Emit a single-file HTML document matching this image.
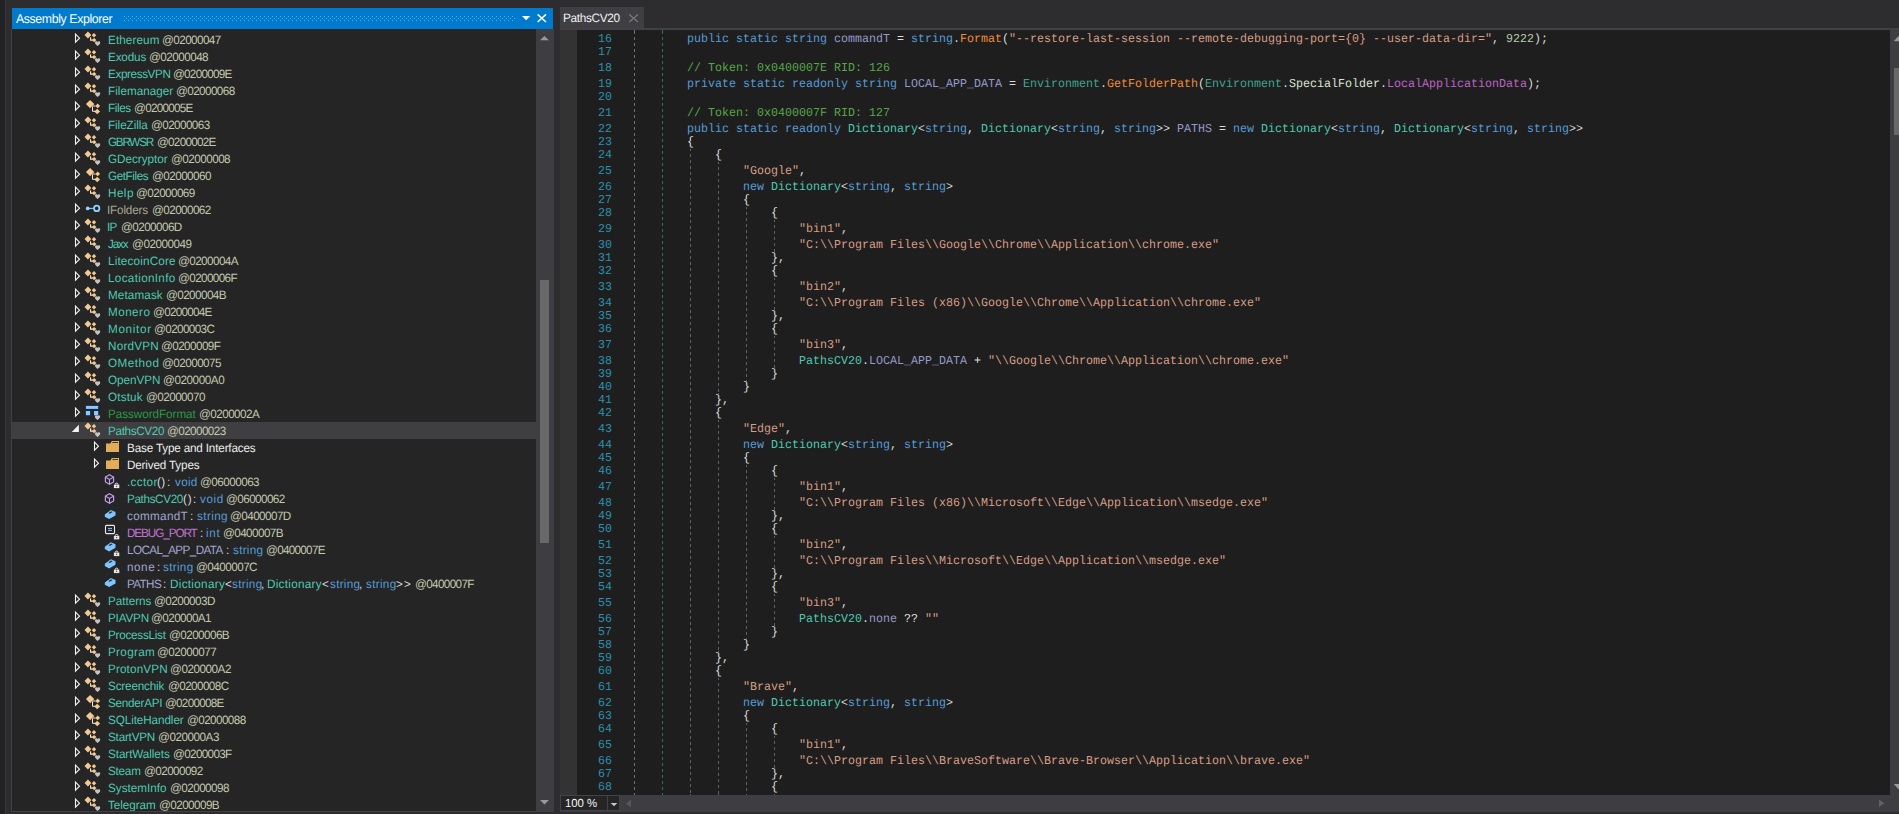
<!DOCTYPE html>
<html><head><meta charset="utf-8"><title>dnSpy</title>
<style>
html,body{margin:0;padding:0}
body{width:1899px;height:814px;overflow:hidden;background:#2d2d30;position:relative;font-family:"Liberation Sans",sans-serif;color:#dcdcdc}
div,span,svg{position:absolute}
.t{white-space:pre;font-size:11.7px;line-height:17px;height:17px;top:0;transform:matrix(1,0,0.001,1.03,0,-0.4);transform-origin:0 13px}
.row{left:12px;width:524px;height:17px}
.cl{white-space:pre;letter-spacing:0.005px;font-variant-ligatures:none;font-family:"Liberation Mono",monospace;font-size:11.6667px;line-height:16px;height:16px;left:631px;transform:matrix(1,0,0.001,1.04,0,0.2);transform-origin:0 11px}
.cl span{position:static}
.ln{white-space:pre;font-family:"Liberation Mono",monospace;font-size:11.6667px;line-height:16px;height:16px;left:577px;width:35px;text-align:right;color:#2b91af;transform:matrix(1,0,0.001,1.04,0,0.2);transform-origin:0 11px}
.g{width:1px}
.k-k{color:#569cd6}.k-t{color:#4ec9b0}.k-st{color:#3fa58f}.k-s{color:#d69d85}.k-n{color:#b5cea8}.k-c{color:#57a64a}.k-p{color:#dcdcdc}.k-sf{color:#9499ca}.k-sm{color:#f08a3c}.k-en{color:#dde4d3}.k-ef{color:#bd63c5}
</style></head><body>
<div style="left:0;top:0;width:5px;height:814px;background:#222224"></div><div style="left:5px;top:0;width:1px;height:814px;background:#3a3a3d"></div><div style="left:12px;top:8px;width:541px;height:21px;background:#007acc"></div><svg style="left:124px;top:15px" width="392" height="7" viewBox="0 0 392 7"><defs><pattern id="gp" width="4" height="4" patternUnits="userSpaceOnUse"><rect x="0" y="1" width="1" height="1" fill="#55aee8"/><rect x="2" y="3" width="1" height="1" fill="#55aee8"/></pattern></defs><rect x="0" y="0" width="392" height="6" fill="url(#gp)"/></svg><svg style="left:520px;top:12px" width="30" height="13" viewBox="0 0 30 13"><path d="M2 4h8.2l-4.1 4.2z" fill="#fff"/><path d="M17.6 2.4l8.4 7.6M26 2.4l-8.4 7.6" stroke="#fff" stroke-width="1.5" fill="none"/></svg><div id="ttl" class="t" style="left:15.6px;top:9px;font-size:12.3px;line-height:21px;height:21px;color:#fff;letter-spacing:-0.375px;left:16.38px">Assembly Explorer</div><div style="left:12px;top:29px;width:524px;height:782px;background:#252526"></div><div style="left:12px;top:811px;width:542px;height:1px;background:#3a3a3d"></div><div style="left:536px;top:29px;width:18px;height:782px;background:#3e3e42"></div><div style="left:540px;top:280px;width:9px;height:263px;background:#686868"></div><svg style="left:536px;top:29px" width="18" height="782" viewBox="0 0 18 782"><path d="M4 11.200h8.900l-4.450 -4.300z" fill="#999"/><path d="M4 771h8.900l-4.450 4.400z" fill="#999"/></svg><div class="row" style="top:31px;"><svg style="left:61px;top:0" width="9" height="17" viewBox="0 0 9 17"><path d="M2.500 3.200v8l4-4z" fill="none" stroke="#f2f2f2" stroke-width="1.100"/></svg><svg style="left:72px;top:0" width="18" height="17" viewBox="0 0 18 17"><path d="M3.950 0.600l3.450 3.400-3.450 3.400-3.450-3.400z" fill="#f3c98f"/><path d="M10 2.100l2.200 2.150-2.200 2.150-2.200-2.150z" fill="#f3c98f"/><path d="M10.100 6.900l2.250 2.200-2.250 2.200-2.250-2.200z" fill="#f3c98f"/><path d="M6.600 6.200v2.900h2" stroke="#fbe9cf" stroke-width="1.100" fill="none"/><path d="M13.6 10.8c-.7-.9-2.6-.7-2.6.9 0 1.300 1.500 2.300 2.600 3.300 1.100-1 2.600-2 2.600-3.300 0-1.600-1.900-1.800-2.600-.9z" fill="#c4c4c4"/></svg><span class="t" style="left:95.90px;color:#4ec9b0;letter-spacing:0.107px;margin-left:-0.36px">Ethereum</span><span class="t" style="left:150.50px;color:#c3c9ae;letter-spacing:-0.572px;margin-left:-0.32px">@02000047</span></div>
<div class="row" style="top:48px;"><svg style="left:61px;top:0" width="9" height="17" viewBox="0 0 9 17"><path d="M2.500 3.200v8l4-4z" fill="none" stroke="#f2f2f2" stroke-width="1.100"/></svg><svg style="left:72px;top:0" width="18" height="17" viewBox="0 0 18 17"><path d="M3.950 0.600l3.450 3.400-3.450 3.400-3.450-3.400z" fill="#f3c98f"/><path d="M10 2.100l2.200 2.150-2.200 2.150-2.200-2.150z" fill="#f3c98f"/><path d="M10.100 6.900l2.250 2.200-2.250 2.200-2.250-2.200z" fill="#f3c98f"/><path d="M6.600 6.200v2.900h2" stroke="#fbe9cf" stroke-width="1.100" fill="none"/><path d="M13.6 10.8c-.7-.9-2.6-.7-2.6.9 0 1.300 1.500 2.300 2.600 3.300 1.100-1 2.600-2 2.600-3.300 0-1.600-1.900-1.800-2.600-.9z" fill="#c4c4c4"/></svg><span class="t" style="left:95.90px;color:#4ec9b0;letter-spacing:-0.143px;margin-left:-0.36px">Exodus</span><span class="t" style="left:137.20px;color:#c3c9ae;letter-spacing:-0.532px;margin-left:-0.32px">@02000048</span></div>
<div class="row" style="top:65px;"><svg style="left:61px;top:0" width="9" height="17" viewBox="0 0 9 17"><path d="M2.500 3.200v8l4-4z" fill="none" stroke="#f2f2f2" stroke-width="1.100"/></svg><svg style="left:72px;top:0" width="18" height="17" viewBox="0 0 18 17"><path d="M3.950 0.600l3.450 3.400-3.450 3.400-3.450-3.400z" fill="#f3c98f"/><path d="M10 2.100l2.200 2.150-2.200 2.150-2.200-2.150z" fill="#f3c98f"/><path d="M10.100 6.900l2.250 2.200-2.250 2.200-2.250-2.200z" fill="#f3c98f"/><path d="M6.600 6.200v2.900h2" stroke="#fbe9cf" stroke-width="1.100" fill="none"/><path d="M13.6 10.8c-.7-.9-2.6-.7-2.6.9 0 1.300 1.500 2.300 2.600 3.300 1.100-1 2.600-2 2.600-3.300 0-1.600-1.900-1.800-2.600-.9z" fill="#c4c4c4"/></svg><span class="t" style="left:95.90px;color:#4ec9b0;letter-spacing:-0.374px;margin-left:-0.36px">ExpressVPN</span><span class="t" style="left:161.50px;color:#c3c9ae;letter-spacing:-0.745px;margin-left:-0.32px">@0200009E</span></div>
<div class="row" style="top:82px;"><svg style="left:61px;top:0" width="9" height="17" viewBox="0 0 9 17"><path d="M2.500 3.200v8l4-4z" fill="none" stroke="#f2f2f2" stroke-width="1.100"/></svg><svg style="left:72px;top:0" width="18" height="17" viewBox="0 0 18 17"><path d="M3.950 0.600l3.450 3.400-3.450 3.400-3.450-3.400z" fill="#f3c98f"/><path d="M10 2.100l2.200 2.150-2.200 2.150-2.200-2.150z" fill="#f3c98f"/><path d="M10.100 6.900l2.250 2.200-2.250 2.200-2.250-2.200z" fill="#f3c98f"/><path d="M6.600 6.200v2.900h2" stroke="#fbe9cf" stroke-width="1.100" fill="none"/><path d="M13.6 10.8c-.7-.9-2.6-.7-2.6.9 0 1.300 1.500 2.300 2.600 3.300 1.100-1 2.600-2 2.600-3.300 0-1.600-1.900-1.800-2.600-.9z" fill="#c4c4c4"/></svg><span class="t" style="left:95.90px;color:#4ec9b0;letter-spacing:0.027px;margin-left:-0.36px">Filemanager</span><span class="t" style="left:164.50px;color:#c3c9ae;letter-spacing:-0.582px;margin-left:-0.32px">@02000068</span></div>
<div class="row" style="top:99px;"><svg style="left:61px;top:0" width="9" height="17" viewBox="0 0 9 17"><path d="M2.500 3.200v8l4-4z" fill="none" stroke="#f2f2f2" stroke-width="1.100"/></svg><svg style="left:72px;top:0" width="18" height="17" viewBox="0 0 18 17"><path d="M6.100 0.900l4.200 4.150-4.200 4.150-4.150-4.150z" fill="#f3c98f"/><path d="M13.700 4.500l2.400 2.400-2.400 2.400-2.400-2.400z" fill="#f3c98f"/><path d="M13.200 9.700l2.900 2.800-2.900 2.800-2.900-2.800z" fill="#f3c98f"/><path d="M8.500 7.500v4.800h2.500M8.500 7h3" stroke="#f7ead6" stroke-width="1" fill="none"/></svg><span class="t" style="left:95.90px;color:#4ec9b0;letter-spacing:-0.379px;margin-left:-0.36px">Files</span><span class="t" style="left:122.10px;color:#c3c9ae;letter-spacing:-0.733px;margin-left:-0.32px">@0200005E</span></div>
<div class="row" style="top:116px;"><svg style="left:61px;top:0" width="9" height="17" viewBox="0 0 9 17"><path d="M2.500 3.200v8l4-4z" fill="none" stroke="#f2f2f2" stroke-width="1.100"/></svg><svg style="left:72px;top:0" width="18" height="17" viewBox="0 0 18 17"><path d="M3.950 0.600l3.450 3.400-3.450 3.400-3.450-3.400z" fill="#f3c98f"/><path d="M10 2.100l2.200 2.150-2.200 2.150-2.200-2.150z" fill="#f3c98f"/><path d="M10.100 6.900l2.250 2.200-2.250 2.200-2.250-2.200z" fill="#f3c98f"/><path d="M6.600 6.200v2.900h2" stroke="#fbe9cf" stroke-width="1.100" fill="none"/><path d="M13.6 10.8c-.7-.9-2.6-.7-2.6.9 0 1.300 1.500 2.300 2.600 3.300 1.100-1 2.600-2 2.600-3.300 0-1.600-1.900-1.800-2.600-.9z" fill="#c4c4c4"/></svg><span class="t" style="left:95.90px;color:#4ec9b0;letter-spacing:-0.065px;margin-left:-0.36px">FileZilla</span><span class="t" style="left:139.20px;color:#c3c9ae;letter-spacing:-0.582px;margin-left:-0.32px">@02000063</span></div>
<div class="row" style="top:133px;"><svg style="left:61px;top:0" width="9" height="17" viewBox="0 0 9 17"><path d="M2.500 3.200v8l4-4z" fill="none" stroke="#f2f2f2" stroke-width="1.100"/></svg><svg style="left:72px;top:0" width="18" height="17" viewBox="0 0 18 17"><path d="M3.950 0.600l3.450 3.400-3.450 3.400-3.450-3.400z" fill="#f3c98f"/><path d="M10 2.100l2.200 2.150-2.200 2.150-2.200-2.150z" fill="#f3c98f"/><path d="M10.100 6.900l2.250 2.200-2.250 2.200-2.250-2.200z" fill="#f3c98f"/><path d="M6.600 6.200v2.900h2" stroke="#fbe9cf" stroke-width="1.100" fill="none"/><path d="M13.6 10.8c-.7-.9-2.6-.7-2.6.9 0 1.300 1.500 2.300 2.600 3.300 1.100-1 2.600-2 2.600-3.300 0-1.600-1.900-1.800-2.600-.9z" fill="#c4c4c4"/></svg><span class="t" style="left:95.90px;color:#4ec9b0;letter-spacing:-1.254px;margin-left:0.01px">GBRWSR</span><span class="t" style="left:145.50px;color:#c3c9ae;letter-spacing:-0.745px;margin-left:-0.32px">@0200002E</span></div>
<div class="row" style="top:150px;"><svg style="left:61px;top:0" width="9" height="17" viewBox="0 0 9 17"><path d="M2.500 3.200v8l4-4z" fill="none" stroke="#f2f2f2" stroke-width="1.100"/></svg><svg style="left:72px;top:0" width="18" height="17" viewBox="0 0 18 17"><path d="M3.950 0.600l3.450 3.400-3.450 3.400-3.450-3.400z" fill="#f3c98f"/><path d="M10 2.100l2.200 2.150-2.200 2.150-2.200-2.150z" fill="#f3c98f"/><path d="M10.100 6.900l2.250 2.200-2.250 2.200-2.250-2.200z" fill="#f3c98f"/><path d="M6.600 6.200v2.900h2" stroke="#fbe9cf" stroke-width="1.100" fill="none"/><path d="M13.6 10.8c-.7-.9-2.6-.7-2.6.9 0 1.300 1.500 2.300 2.600 3.300 1.100-1 2.600-2 2.600-3.300 0-1.600-1.900-1.800-2.600-.9z" fill="#c4c4c4"/></svg><span class="t" style="left:95.90px;color:#4ec9b0;letter-spacing:-0.022px;margin-left:0.01px">GDecryptor</span><span class="t" style="left:159.10px;color:#c3c9ae;letter-spacing:-0.532px;margin-left:-0.32px">@02000008</span></div>
<div class="row" style="top:167px;"><svg style="left:61px;top:0" width="9" height="17" viewBox="0 0 9 17"><path d="M2.500 3.200v8l4-4z" fill="none" stroke="#f2f2f2" stroke-width="1.100"/></svg><svg style="left:72px;top:0" width="18" height="17" viewBox="0 0 18 17"><path d="M6.100 0.900l4.200 4.150-4.200 4.150-4.150-4.150z" fill="#f3c98f"/><path d="M13.700 4.500l2.400 2.400-2.400 2.400-2.400-2.400z" fill="#f3c98f"/><path d="M13.200 9.700l2.900 2.800-2.900 2.800-2.900-2.800z" fill="#f3c98f"/><path d="M8.500 7.500v4.800h2.500M8.500 7h3" stroke="#f7ead6" stroke-width="1" fill="none"/></svg><span class="t" style="left:95.90px;color:#4ec9b0;letter-spacing:-0.417px;margin-left:0.01px">GetFiles</span><span class="t" style="left:140.10px;color:#c3c9ae;letter-spacing:-0.551px;margin-left:-0.32px">@02000060</span></div>
<div class="row" style="top:184px;"><svg style="left:61px;top:0" width="9" height="17" viewBox="0 0 9 17"><path d="M2.500 3.200v8l4-4z" fill="none" stroke="#f2f2f2" stroke-width="1.100"/></svg><svg style="left:72px;top:0" width="18" height="17" viewBox="0 0 18 17"><path d="M3.950 0.600l3.450 3.400-3.450 3.400-3.450-3.400z" fill="#f3c98f"/><path d="M10 2.100l2.200 2.150-2.200 2.150-2.200-2.150z" fill="#f3c98f"/><path d="M10.100 6.900l2.250 2.200-2.250 2.200-2.250-2.200z" fill="#f3c98f"/><path d="M6.600 6.200v2.900h2" stroke="#fbe9cf" stroke-width="1.100" fill="none"/><path d="M13.6 10.8c-.7-.9-2.6-.7-2.6.9 0 1.300 1.500 2.300 2.600 3.300 1.100-1 2.600-2 2.600-3.300 0-1.600-1.900-1.800-2.600-.9z" fill="#c4c4c4"/></svg><span class="t" style="left:95.90px;color:#4ec9b0;letter-spacing:0.464px;margin-left:-0.36px">Help</span><span class="t" style="left:124.40px;color:#c3c9ae;letter-spacing:-0.577px;margin-left:-0.32px">@02000069</span></div>
<div class="row" style="top:201px;"><svg style="left:61px;top:0" width="9" height="17" viewBox="0 0 9 17"><path d="M2.500 3.200v8l4-4z" fill="none" stroke="#f2f2f2" stroke-width="1.100"/></svg><svg style="left:72px;top:0" width="18" height="17" viewBox="0 0 18 17"><circle cx="3.700" cy="7.400" r="1.900" fill="#8dd0ff"/><path d="M5 7.400h4" stroke="#8dd0ff" stroke-width="1.100"/><circle cx="12.700" cy="7.400" r="2.700" fill="none" stroke="#8dd0ff" stroke-width="1.800"/></svg><span class="t" style="left:95.90px;color:#a5a592;letter-spacing:-0.164px;margin-left:-0.48px">IFolders</span><span class="t" style="left:140.10px;color:#c3c9ae;letter-spacing:-0.572px;margin-left:-0.32px">@02000062</span></div>
<div class="row" style="top:218px;"><svg style="left:61px;top:0" width="9" height="17" viewBox="0 0 9 17"><path d="M2.500 3.200v8l4-4z" fill="none" stroke="#f2f2f2" stroke-width="1.100"/></svg><svg style="left:72px;top:0" width="18" height="17" viewBox="0 0 18 17"><path d="M3.950 0.600l3.450 3.400-3.450 3.400-3.450-3.400z" fill="#f3c98f"/><path d="M10 2.100l2.200 2.150-2.200 2.150-2.200-2.150z" fill="#f3c98f"/><path d="M10.100 6.900l2.250 2.200-2.250 2.200-2.250-2.200z" fill="#f3c98f"/><path d="M6.600 6.200v2.900h2" stroke="#fbe9cf" stroke-width="1.100" fill="none"/><path d="M13.6 10.8c-.7-.9-2.6-.7-2.6.9 0 1.300 1.500 2.300 2.600 3.300 1.100-1 2.600-2 2.600-3.300 0-1.600-1.900-1.800-2.600-.9z" fill="#c4c4c4"/></svg><span class="t" style="left:95.90px;color:#4ec9b0;letter-spacing:-0.863px;margin-left:-0.48px">IP</span><span class="t" style="left:108.90px;color:#c3c9ae;letter-spacing:-0.568px;margin-left:-0.32px">@0200006D</span></div>
<div class="row" style="top:235px;"><svg style="left:61px;top:0" width="9" height="17" viewBox="0 0 9 17"><path d="M2.500 3.200v8l4-4z" fill="none" stroke="#f2f2f2" stroke-width="1.100"/></svg><svg style="left:72px;top:0" width="18" height="17" viewBox="0 0 18 17"><path d="M3.950 0.600l3.450 3.400-3.450 3.400-3.450-3.400z" fill="#f3c98f"/><path d="M10 2.100l2.200 2.150-2.200 2.150-2.200-2.150z" fill="#f3c98f"/><path d="M10.100 6.900l2.250 2.200-2.250 2.200-2.250-2.200z" fill="#f3c98f"/><path d="M6.600 6.200v2.900h2" stroke="#fbe9cf" stroke-width="1.100" fill="none"/><path d="M13.6 10.8c-.7-.9-2.6-.7-2.6.9 0 1.300 1.500 2.300 2.600 3.300 1.100-1 2.600-2 2.600-3.300 0-1.600-1.900-1.800-2.600-.9z" fill="#c4c4c4"/></svg><span class="t" style="left:95.90px;color:#4ec9b0;letter-spacing:-1.150px;margin-left:0.42px">Jaxx</span><span class="t" style="left:120.70px;color:#c3c9ae;letter-spacing:-0.489px;margin-left:-0.32px">@02000049</span></div>
<div class="row" style="top:252px;"><svg style="left:61px;top:0" width="9" height="17" viewBox="0 0 9 17"><path d="M2.500 3.200v8l4-4z" fill="none" stroke="#f2f2f2" stroke-width="1.100"/></svg><svg style="left:72px;top:0" width="18" height="17" viewBox="0 0 18 17"><path d="M3.950 0.600l3.450 3.400-3.450 3.400-3.450-3.400z" fill="#f3c98f"/><path d="M10 2.100l2.200 2.150-2.200 2.150-2.200-2.150z" fill="#f3c98f"/><path d="M10.100 6.900l2.250 2.200-2.250 2.200-2.250-2.200z" fill="#f3c98f"/><path d="M6.600 6.200v2.900h2" stroke="#fbe9cf" stroke-width="1.100" fill="none"/><path d="M13.6 10.8c-.7-.9-2.6-.7-2.6.9 0 1.300 1.500 2.300 2.600 3.300 1.100-1 2.600-2 2.600-3.300 0-1.600-1.900-1.800-2.600-.9z" fill="#c4c4c4"/></svg><span class="t" style="left:95.90px;color:#4ec9b0;letter-spacing:0.177px;margin-left:-0.36px">LitecoinCore</span><span class="t" style="left:166.40px;color:#c3c9ae;letter-spacing:-0.580px;margin-left:-0.32px">@0200004A</span></div>
<div class="row" style="top:269px;"><svg style="left:61px;top:0" width="9" height="17" viewBox="0 0 9 17"><path d="M2.500 3.200v8l4-4z" fill="none" stroke="#f2f2f2" stroke-width="1.100"/></svg><svg style="left:72px;top:0" width="18" height="17" viewBox="0 0 18 17"><path d="M3.950 0.600l3.450 3.400-3.450 3.400-3.450-3.400z" fill="#f3c98f"/><path d="M10 2.100l2.200 2.150-2.200 2.150-2.200-2.150z" fill="#f3c98f"/><path d="M10.100 6.900l2.250 2.200-2.250 2.200-2.250-2.200z" fill="#f3c98f"/><path d="M6.600 6.200v2.900h2" stroke="#fbe9cf" stroke-width="1.100" fill="none"/><path d="M13.6 10.8c-.7-.9-2.6-.7-2.6.9 0 1.300 1.500 2.300 2.600 3.300 1.100-1 2.600-2 2.600-3.300 0-1.600-1.900-1.800-2.600-.9z" fill="#c4c4c4"/></svg><span class="t" style="left:95.90px;color:#4ec9b0;letter-spacing:0.323px;margin-left:-0.36px">LocationInfo</span><span class="t" style="left:166.20px;color:#c3c9ae;letter-spacing:-0.618px;margin-left:-0.32px">@0200006F</span></div>
<div class="row" style="top:286px;"><svg style="left:61px;top:0" width="9" height="17" viewBox="0 0 9 17"><path d="M2.500 3.200v8l4-4z" fill="none" stroke="#f2f2f2" stroke-width="1.100"/></svg><svg style="left:72px;top:0" width="18" height="17" viewBox="0 0 18 17"><path d="M3.950 0.600l3.450 3.400-3.450 3.400-3.450-3.400z" fill="#f3c98f"/><path d="M10 2.100l2.200 2.150-2.200 2.150-2.200-2.150z" fill="#f3c98f"/><path d="M10.100 6.900l2.250 2.200-2.250 2.200-2.250-2.200z" fill="#f3c98f"/><path d="M6.600 6.200v2.900h2" stroke="#fbe9cf" stroke-width="1.100" fill="none"/><path d="M13.6 10.8c-.7-.9-2.6-.7-2.6.9 0 1.300 1.500 2.300 2.600 3.300 1.100-1 2.600-2 2.600-3.300 0-1.600-1.900-1.800-2.600-.9z" fill="#c4c4c4"/></svg><span class="t" style="left:95.90px;color:#4ec9b0;letter-spacing:0.115px;margin-left:-0.36px">Metamask</span><span class="t" style="left:154.10px;color:#c3c9ae;letter-spacing:-0.581px;margin-left:-0.32px">@0200004B</span></div>
<div class="row" style="top:303px;"><svg style="left:61px;top:0" width="9" height="17" viewBox="0 0 9 17"><path d="M2.500 3.200v8l4-4z" fill="none" stroke="#f2f2f2" stroke-width="1.100"/></svg><svg style="left:72px;top:0" width="18" height="17" viewBox="0 0 18 17"><path d="M3.950 0.600l3.450 3.400-3.450 3.400-3.450-3.400z" fill="#f3c98f"/><path d="M10 2.100l2.200 2.150-2.200 2.150-2.200-2.150z" fill="#f3c98f"/><path d="M10.100 6.900l2.250 2.200-2.250 2.200-2.250-2.200z" fill="#f3c98f"/><path d="M6.600 6.200v2.900h2" stroke="#fbe9cf" stroke-width="1.100" fill="none"/><path d="M13.6 10.8c-.7-.9-2.6-.7-2.6.9 0 1.300 1.500 2.300 2.600 3.300 1.100-1 2.600-2 2.600-3.300 0-1.600-1.900-1.800-2.600-.9z" fill="#c4c4c4"/></svg><span class="t" style="left:95.90px;color:#4ec9b0;letter-spacing:0.459px;margin-left:-0.36px">Monero</span><span class="t" style="left:141.10px;color:#c3c9ae;letter-spacing:-0.720px;margin-left:-0.32px">@0200004E</span></div>
<div class="row" style="top:320px;"><svg style="left:61px;top:0" width="9" height="17" viewBox="0 0 9 17"><path d="M2.500 3.200v8l4-4z" fill="none" stroke="#f2f2f2" stroke-width="1.100"/></svg><svg style="left:72px;top:0" width="18" height="17" viewBox="0 0 18 17"><path d="M3.950 0.600l3.450 3.400-3.450 3.400-3.450-3.400z" fill="#f3c98f"/><path d="M10 2.100l2.200 2.150-2.200 2.150-2.200-2.150z" fill="#f3c98f"/><path d="M10.100 6.900l2.250 2.200-2.250 2.200-2.250-2.200z" fill="#f3c98f"/><path d="M6.600 6.200v2.900h2" stroke="#fbe9cf" stroke-width="1.100" fill="none"/><path d="M13.6 10.8c-.7-.9-2.6-.7-2.6.9 0 1.300 1.500 2.300 2.600 3.300 1.100-1 2.600-2 2.600-3.300 0-1.600-1.900-1.800-2.600-.9z" fill="#c4c4c4"/></svg><span class="t" style="left:95.90px;color:#4ec9b0;letter-spacing:0.693px;margin-left:-0.36px">Monitor</span><span class="t" style="left:142.30px;color:#c3c9ae;letter-spacing:-0.608px;margin-left:-0.32px">@0200003C</span></div>
<div class="row" style="top:337px;"><svg style="left:61px;top:0" width="9" height="17" viewBox="0 0 9 17"><path d="M2.500 3.200v8l4-4z" fill="none" stroke="#f2f2f2" stroke-width="1.100"/></svg><svg style="left:72px;top:0" width="18" height="17" viewBox="0 0 18 17"><path d="M3.950 0.600l3.450 3.400-3.450 3.400-3.450-3.400z" fill="#f3c98f"/><path d="M10 2.100l2.200 2.150-2.200 2.150-2.200-2.150z" fill="#f3c98f"/><path d="M10.100 6.900l2.250 2.200-2.250 2.200-2.250-2.200z" fill="#f3c98f"/><path d="M6.600 6.200v2.900h2" stroke="#fbe9cf" stroke-width="1.100" fill="none"/><path d="M13.6 10.8c-.7-.9-2.6-.7-2.6.9 0 1.300 1.500 2.300 2.600 3.300 1.100-1 2.600-2 2.600-3.300 0-1.600-1.900-1.800-2.600-.9z" fill="#c4c4c4"/></svg><span class="t" style="left:95.90px;color:#4ec9b0;letter-spacing:0.238px;margin-left:-0.36px">NordVPN</span><span class="t" style="left:149.00px;color:#c3c9ae;letter-spacing:-0.580px;margin-left:-0.32px">@0200009F</span></div>
<div class="row" style="top:354px;"><svg style="left:61px;top:0" width="9" height="17" viewBox="0 0 9 17"><path d="M2.500 3.200v8l4-4z" fill="none" stroke="#f2f2f2" stroke-width="1.100"/></svg><svg style="left:72px;top:0" width="18" height="17" viewBox="0 0 18 17"><path d="M3.950 0.600l3.450 3.400-3.450 3.400-3.450-3.400z" fill="#f3c98f"/><path d="M10 2.100l2.200 2.150-2.200 2.150-2.200-2.150z" fill="#f3c98f"/><path d="M10.100 6.900l2.250 2.200-2.250 2.200-2.250-2.200z" fill="#f3c98f"/><path d="M6.600 6.200v2.900h2" stroke="#fbe9cf" stroke-width="1.100" fill="none"/><path d="M13.6 10.8c-.7-.9-2.6-.7-2.6.9 0 1.300 1.500 2.300 2.600 3.300 1.100-1 2.600-2 2.600-3.300 0-1.600-1.900-1.800-2.600-.9z" fill="#c4c4c4"/></svg><span class="t" style="left:95.90px;color:#4ec9b0;letter-spacing:0.486px;margin-left:0.05px">OMethod</span><span class="t" style="left:150.20px;color:#c3c9ae;letter-spacing:-0.547px;margin-left:-0.32px">@02000075</span></div>
<div class="row" style="top:371px;"><svg style="left:61px;top:0" width="9" height="17" viewBox="0 0 9 17"><path d="M2.500 3.200v8l4-4z" fill="none" stroke="#f2f2f2" stroke-width="1.100"/></svg><svg style="left:72px;top:0" width="18" height="17" viewBox="0 0 18 17"><path d="M3.950 0.600l3.450 3.400-3.450 3.400-3.450-3.400z" fill="#f3c98f"/><path d="M10 2.100l2.200 2.150-2.200 2.150-2.200-2.150z" fill="#f3c98f"/><path d="M10.100 6.900l2.250 2.200-2.250 2.200-2.250-2.200z" fill="#f3c98f"/><path d="M6.600 6.200v2.900h2" stroke="#fbe9cf" stroke-width="1.100" fill="none"/><path d="M13.6 10.8c-.7-.9-2.6-.7-2.6.9 0 1.300 1.500 2.300 2.600 3.300 1.100-1 2.600-2 2.600-3.300 0-1.600-1.900-1.800-2.600-.9z" fill="#c4c4c4"/></svg><span class="t" style="left:95.90px;color:#4ec9b0;letter-spacing:-0.038px;margin-left:0.05px">OpenVPN</span><span class="t" style="left:151.40px;color:#c3c9ae;letter-spacing:-0.439px;margin-left:-0.32px">@020000A0</span></div>
<div class="row" style="top:388px;"><svg style="left:61px;top:0" width="9" height="17" viewBox="0 0 9 17"><path d="M2.500 3.200v8l4-4z" fill="none" stroke="#f2f2f2" stroke-width="1.100"/></svg><svg style="left:72px;top:0" width="18" height="17" viewBox="0 0 18 17"><path d="M3.950 0.600l3.450 3.400-3.450 3.400-3.450-3.400z" fill="#f3c98f"/><path d="M10 2.100l2.200 2.150-2.200 2.150-2.200-2.150z" fill="#f3c98f"/><path d="M10.100 6.900l2.250 2.200-2.250 2.200-2.250-2.200z" fill="#f3c98f"/><path d="M6.600 6.200v2.900h2" stroke="#fbe9cf" stroke-width="1.100" fill="none"/><path d="M13.6 10.8c-.7-.9-2.6-.7-2.6.9 0 1.300 1.500 2.300 2.600 3.300 1.100-1 2.600-2 2.600-3.300 0-1.600-1.900-1.800-2.600-.9z" fill="#c4c4c4"/></svg><span class="t" style="left:95.90px;color:#4ec9b0;letter-spacing:0.169px;margin-left:0.05px">Otstuk</span><span class="t" style="left:134.20px;color:#c3c9ae;letter-spacing:-0.551px;margin-left:-0.32px">@02000070</span></div>
<div class="row" style="top:405px;"><svg style="left:61px;top:0" width="9" height="17" viewBox="0 0 9 17"><path d="M2.500 3.200v8l4-4z" fill="none" stroke="#f2f2f2" stroke-width="1.100"/></svg><svg style="left:72px;top:0" width="18" height="17" viewBox="0 0 18 17"><rect x="1.400" y="0.400" width="13.300" height="4" fill="#0c2d52"/><rect x="1.400" y="5.500" width="5.200" height="5.200" fill="#0c2d52"/><rect x="9.500" y="5.500" width="5.200" height="5.200" fill="#0c2d52"/><rect x="1.900" y="0.900" width="12.300" height="3" fill="#8cc8ff"/><rect x="1.900" y="6" width="4.200" height="4.200" fill="#8cc8ff"/><rect x="10" y="6" width="4.200" height="4.200" fill="#8cc8ff"/><path d="M13.5 10.9c-.7-.9-2.6-.7-2.6.9 0 1.300 1.500 2.300 2.600 3.300 1.100-1 2.600-2 2.600-3.300 0-1.600-1.900-1.800-2.600-.9z" fill="#c4c4c4"/></svg><span class="t" style="left:95.90px;color:#2a9845;letter-spacing:-0.039px;margin-left:-0.36px">PasswordFormat</span><span class="t" style="left:187.30px;color:#c3c9ae;letter-spacing:-0.555px;margin-left:-0.32px">@0200002A</span></div>
<div class="row" style="top:422px;background:#3f3f42;"><svg style="left:59.8px;top:0" width="10" height="17" viewBox="0 0 10 17"><path d="M6.900 2.800v7.300h-7.300z" fill="#f4f4f4"/></svg><svg style="left:72px;top:0" width="18" height="17" viewBox="0 0 18 17"><path d="M3.950 0.600l3.450 3.400-3.450 3.400-3.450-3.400z" fill="#f3c98f"/><path d="M10 2.100l2.200 2.150-2.200 2.150-2.200-2.150z" fill="#f3c98f"/><path d="M10.100 6.900l2.250 2.200-2.250 2.200-2.250-2.200z" fill="#f3c98f"/><path d="M6.600 6.200v2.900h2" stroke="#fbe9cf" stroke-width="1.100" fill="none"/><path d="M13.6 10.8c-.7-.9-2.6-.7-2.6.9 0 1.300 1.500 2.300 2.600 3.300 1.100-1 2.600-2 2.600-3.300 0-1.600-1.900-1.800-2.600-.9z" fill="#c4c4c4"/></svg><span class="t" style="left:95.90px;color:#4ec9b0;letter-spacing:-0.328px;margin-left:-0.36px">PathsCV20</span><span class="t" style="left:155.30px;color:#c3c9ae;letter-spacing:-0.582px;margin-left:-0.32px">@02000023</span></div>
<div class="row" style="top:439px;"><svg style="left:80px;top:0" width="9" height="17" viewBox="0 0 9 17"><path d="M2.500 3.200v8l4-4z" fill="none" stroke="#f2f2f2" stroke-width="1.100"/></svg><svg style="left:92px;top:0" width="18" height="17" viewBox="0 0 18 17"><path d="M2 4.600h4.400l1.400-2.600h7.200v11h-13z" fill="#e2ad5a"/><path d="M8.400 3.500h5.600" stroke="#3a2c10" stroke-width="0.900"/></svg><span class="t" style="left:115.20px;color:#ececec;letter-spacing:-0.159px;margin-left:-0.36px">Base Type and Interfaces</span></div>
<div class="row" style="top:456px;"><svg style="left:80px;top:0" width="9" height="17" viewBox="0 0 9 17"><path d="M2.500 3.200v8l4-4z" fill="none" stroke="#f2f2f2" stroke-width="1.100"/></svg><svg style="left:92px;top:0" width="18" height="17" viewBox="0 0 18 17"><path d="M2 4.600h4.400l1.400-2.600h7.200v11h-13z" fill="#e2ad5a"/><path d="M8.400 3.500h5.600" stroke="#3a2c10" stroke-width="0.900"/></svg><span class="t" style="left:115.20px;color:#ececec;letter-spacing:-0.161px;margin-left:-0.36px">Derived Types</span></div>
<div class="row" style="top:473px;"><svg style="left:92px;top:0" width="18" height="17" viewBox="0 0 18 17"><g transform="translate(0 1)"><path d="M5.500 0.700l4.100 2.350v4.900l-4.100 2.350-4.100-2.350v-4.900z" fill="none" stroke="#c09ce8" stroke-width="1.200"/><path d="M1.600 3.200l3.900 2.200 3.900-2.200M5.500 5.400v4.800" fill="none" stroke="#c09ce8" stroke-width="1.100"/></g><rect x="9.9" y="11.6" width="5.4" height="3.5" fill="#e6e6e6"/><path d="M11.3 11.6v-.4a1.300 1.100 0 0 1 2.600 0v.4" fill="none" stroke="#e6e6e6" stroke-width="1"/><rect x="12.100000000000001" y="12.799999999999999" width="1" height="1" fill="#252526"/></svg><span class="t" style="left:115.20px;color:#4ec9b0;letter-spacing:0.354px;margin-left:-0.47px">.cctor</span><span class="t" style="left:145.10px;color:#dcdcdc;letter-spacing:0.441px;margin-left:-0.13px">()</span><span class="t" style="left:155.30px;color:#dcdcdc;margin-left:-0.18px">:</span><span class="t" style="left:162.00px;color:#569cd6;letter-spacing:0.309px;margin-left:0.56px">void</span><span class="t" style="left:188.10px;color:#c3c9ae;letter-spacing:-0.532px;margin-left:-0.32px">@06000063</span></div>
<div class="row" style="top:490px;"><svg style="left:92px;top:0" width="18" height="17" viewBox="0 0 18 17"><g transform="translate(0 3)"><path d="M5.500 0.700l4.100 2.350v4.900l-4.100 2.350-4.100-2.350v-4.900z" fill="none" stroke="#c09ce8" stroke-width="1.200"/><path d="M1.600 3.200l3.900 2.200 3.900-2.200M5.500 5.400v4.800" fill="none" stroke="#c09ce8" stroke-width="1.100"/></g></svg><span class="t" style="left:115.20px;color:#4ec9b0;letter-spacing:-0.353px;margin-left:-0.36px">PathsCV20</span><span class="t" style="left:170.90px;color:#dcdcdc;letter-spacing:0.741px;margin-left:-0.13px">()</span><span class="t" style="left:181.40px;color:#dcdcdc;margin-left:-0.18px">:</span><span class="t" style="left:187.30px;color:#569cd6;letter-spacing:0.576px;margin-left:0.56px">void</span><span class="t" style="left:214.20px;color:#c3c9ae;letter-spacing:-0.572px;margin-left:-0.32px">@06000062</span></div>
<div class="row" style="top:507px;"><svg style="left:92px;top:0" width="18" height="17" viewBox="0 0 18 17"><g transform="translate(0 2.7)"><path d="M0.800 4.700l6.100-4.500 4.600 2.100v3.400l-6.400 3.700-4.300-2.400z" fill="#7fc6ff"/><path d="M4.400 3.300l2.800-1.700 1.500 0.700-2.800 1.800z" fill="#1d3550"/></g></svg><span class="t" style="left:115.20px;color:#a3a5cf;letter-spacing:0.312px;margin-left:0.10px">commandT</span><span class="t" style="left:178.60px;color:#dcdcdc;margin-left:-0.18px">:</span><span class="t" style="left:184.40px;color:#569cd6;letter-spacing:0.395px;margin-left:0.27px">string</span><span class="t" style="left:218.10px;color:#c3c9ae;letter-spacing:-0.568px;margin-left:-0.32px">@0400007D</span></div>
<div class="row" style="top:524px;"><svg style="left:92px;top:0" width="18" height="17" viewBox="0 0 18 17"><rect x="1.500" y="1.400" width="9" height="8.200" rx="1" fill="none" stroke="#e8e8e8" stroke-width="1.100"/><path d="M4 4.400h4M4 6.400h4" stroke="#8cc8ff" stroke-width="1"/><rect x="9.9" y="11.9" width="5.4" height="3.5" fill="#e6e6e6"/><path d="M11.3 11.9v-.4a1.300 1.100 0 0 1 2.600 0v.4" fill="none" stroke="#e6e6e6" stroke-width="1"/><rect x="12.100000000000001" y="13.1" width="1" height="1" fill="#252526"/></svg><span class="t" style="left:115.20px;color:#c273d3;letter-spacing:-1.068px;margin-left:-0.36px">DEBUG_PORT</span><span class="t" style="left:187.90px;color:#dcdcdc;margin-left:-0.18px">:</span><span class="t" style="left:193.70px;color:#569cd6;letter-spacing:0.748px;margin-left:-0.18px">int</span><span class="t" style="left:211.20px;color:#c3c9ae;letter-spacing:-0.581px;margin-left:-0.32px">@0400007B</span></div>
<div class="row" style="top:541px;"><svg style="left:92px;top:0" width="18" height="17" viewBox="0 0 18 17"><g transform="translate(0 1)"><path d="M0.800 4.700l6.100-4.500 4.600 2.100v3.400l-6.400 3.700-4.300-2.400z" fill="#7fc6ff"/><path d="M4.400 3.300l2.800-1.700 1.500 0.700-2.800 1.800z" fill="#1d3550"/></g><rect x="9.9" y="11.6" width="5.4" height="3.5" fill="#e6e6e6"/><path d="M11.3 11.6v-.4a1.300 1.100 0 0 1 2.600 0v.4" fill="none" stroke="#e6e6e6" stroke-width="1"/><rect x="12.100000000000001" y="12.799999999999999" width="1" height="1" fill="#252526"/></svg><span class="t" style="left:115.20px;color:#a3a5cf;letter-spacing:-0.607px;margin-left:-0.36px">LOCAL_APP_DATA</span><span class="t" style="left:214.30px;color:#dcdcdc;margin-left:-0.18px">:</span><span class="t" style="left:220.60px;color:#569cd6;letter-spacing:0.295px;margin-left:0.27px">string</span><span class="t" style="left:254.20px;color:#c3c9ae;letter-spacing:-0.708px;margin-left:-0.32px">@0400007E</span></div>
<div class="row" style="top:558px;"><svg style="left:92px;top:0" width="18" height="17" viewBox="0 0 18 17"><g transform="translate(0 1)"><path d="M0.800 4.700l6.100-4.500 4.600 2.100v3.400l-6.400 3.700-4.300-2.400z" fill="#7fc6ff"/><path d="M4.400 3.300l2.800-1.700 1.500 0.700-2.800 1.800z" fill="#1d3550"/></g><rect x="9.9" y="11.6" width="5.4" height="3.5" fill="#e6e6e6"/><path d="M11.3 11.6v-.4a1.300 1.100 0 0 1 2.600 0v.4" fill="none" stroke="#e6e6e6" stroke-width="1"/><rect x="12.100000000000001" y="12.799999999999999" width="1" height="1" fill="#252526"/></svg><span class="t" style="left:115.30px;color:#a3a5cf;letter-spacing:0.556px;margin-left:-0.18px">none</span><span class="t" style="left:144.80px;color:#dcdcdc;margin-left:-0.18px">:</span><span class="t" style="left:150.50px;color:#569cd6;letter-spacing:0.315px;margin-left:0.27px">string</span><span class="t" style="left:183.90px;color:#c3c9ae;letter-spacing:-0.533px;margin-left:-0.32px">@0400007C</span></div>
<div class="row" style="top:575px;"><svg style="left:92px;top:0" width="18" height="17" viewBox="0 0 18 17"><g transform="translate(0 2.7)"><path d="M0.800 4.700l6.100-4.500 4.600 2.100v3.400l-6.400 3.700-4.300-2.400z" fill="#7fc6ff"/><path d="M4.400 3.300l2.800-1.700 1.500 0.700-2.800 1.800z" fill="#1d3550"/></g></svg><span class="t" style="left:115.30px;color:#a3a5cf;letter-spacing:-0.638px;margin-left:-0.36px">PATHS</span><span class="t" style="left:151.60px;color:#dcdcdc;margin-left:-0.18px">:</span><span class="t" style="left:157.90px;color:#4ec9b0;letter-spacing:0.311px;margin-left:-0.36px">Dictionary</span><span class="t" style="left:213.00px;color:#dcdcdc;margin-left:-0.32px">&lt;</span><span class="t" style="left:219.30px;color:#569cd6;letter-spacing:0.315px;margin-left:0.27px">string</span><span class="t" style="left:249.00px;color:#dcdcdc;margin-left:-0.23px">,</span><span class="t" style="left:255.40px;color:#4ec9b0;letter-spacing:0.289px;margin-left:-0.36px">Dictionary</span><span class="t" style="left:310.30px;color:#dcdcdc;margin-left:-0.02px">&lt;</span><span class="t" style="left:317.40px;color:#569cd6;letter-spacing:0.295px;margin-left:0.27px">string</span><span class="t" style="left:347.00px;color:#dcdcdc;margin-left:-0.23px">,</span><span class="t" style="left:353.30px;color:#569cd6;letter-spacing:0.315px;margin-left:0.27px">string</span><span class="t" style="left:383.90px;color:#dcdcdc;margin-left:-0.07px">&gt;</span><span class="t" style="left:391.70px;color:#dcdcdc;margin-left:-0.07px">&gt;</span><span class="t" style="left:403.40px;color:#c3c9ae;letter-spacing:-0.630px;margin-left:-0.32px">@0400007F</span></div>
<div class="row" style="top:592px;"><svg style="left:61px;top:0" width="9" height="17" viewBox="0 0 9 17"><path d="M2.500 3.200v8l4-4z" fill="none" stroke="#f2f2f2" stroke-width="1.100"/></svg><svg style="left:72px;top:0" width="18" height="17" viewBox="0 0 18 17"><path d="M3.950 0.600l3.450 3.400-3.450 3.400-3.450-3.400z" fill="#f3c98f"/><path d="M10 2.100l2.200 2.150-2.200 2.150-2.200-2.150z" fill="#f3c98f"/><path d="M10.100 6.900l2.250 2.200-2.250 2.200-2.250-2.200z" fill="#f3c98f"/><path d="M6.600 6.200v2.900h2" stroke="#fbe9cf" stroke-width="1.100" fill="none"/><path d="M13.6 10.8c-.7-.9-2.6-.7-2.6.9 0 1.300 1.500 2.300 2.600 3.300 1.100-1 2.600-2 2.600-3.300 0-1.600-1.900-1.800-2.600-.9z" fill="#c4c4c4"/></svg><span class="t" style="left:95.90px;color:#4ec9b0;letter-spacing:-0.023px;margin-left:-0.36px">Patterns</span><span class="t" style="left:142.20px;color:#c3c9ae;letter-spacing:-0.556px;margin-left:-0.32px">@0200003D</span></div>
<div class="row" style="top:609px;"><svg style="left:61px;top:0" width="9" height="17" viewBox="0 0 9 17"><path d="M2.500 3.200v8l4-4z" fill="none" stroke="#f2f2f2" stroke-width="1.100"/></svg><svg style="left:72px;top:0" width="18" height="17" viewBox="0 0 18 17"><path d="M3.950 0.600l3.450 3.400-3.450 3.400-3.450-3.400z" fill="#f3c98f"/><path d="M10 2.100l2.200 2.150-2.200 2.150-2.200-2.150z" fill="#f3c98f"/><path d="M10.100 6.900l2.250 2.200-2.250 2.200-2.250-2.200z" fill="#f3c98f"/><path d="M6.600 6.200v2.900h2" stroke="#fbe9cf" stroke-width="1.100" fill="none"/><path d="M13.6 10.8c-.7-.9-2.6-.7-2.6.9 0 1.300 1.500 2.300 2.600 3.300 1.100-1 2.600-2 2.600-3.300 0-1.600-1.900-1.800-2.600-.9z" fill="#c4c4c4"/></svg><span class="t" style="left:95.90px;color:#4ec9b0;letter-spacing:-0.183px;margin-left:-0.36px">PIAVPN</span><span class="t" style="left:139.20px;color:#c3c9ae;letter-spacing:-0.574px;margin-left:-0.32px">@020000A1</span></div>
<div class="row" style="top:626px;"><svg style="left:61px;top:0" width="9" height="17" viewBox="0 0 9 17"><path d="M2.500 3.200v8l4-4z" fill="none" stroke="#f2f2f2" stroke-width="1.100"/></svg><svg style="left:72px;top:0" width="18" height="17" viewBox="0 0 18 17"><path d="M3.950 0.600l3.450 3.400-3.450 3.400-3.450-3.400z" fill="#f3c98f"/><path d="M10 2.100l2.200 2.150-2.200 2.150-2.200-2.150z" fill="#f3c98f"/><path d="M10.100 6.900l2.250 2.200-2.250 2.200-2.250-2.200z" fill="#f3c98f"/><path d="M6.600 6.200v2.900h2" stroke="#fbe9cf" stroke-width="1.100" fill="none"/><path d="M13.6 10.8c-.7-.9-2.6-.7-2.6.9 0 1.300 1.500 2.300 2.600 3.300 1.100-1 2.600-2 2.600-3.300 0-1.600-1.900-1.800-2.600-.9z" fill="#c4c4c4"/></svg><span class="t" style="left:95.90px;color:#4ec9b0;letter-spacing:-0.249px;margin-left:-0.36px">ProcessList</span><span class="t" style="left:156.90px;color:#c3c9ae;letter-spacing:-0.569px;margin-left:-0.32px">@0200006B</span></div>
<div class="row" style="top:643px;"><svg style="left:61px;top:0" width="9" height="17" viewBox="0 0 9 17"><path d="M2.500 3.200v8l4-4z" fill="none" stroke="#f2f2f2" stroke-width="1.100"/></svg><svg style="left:72px;top:0" width="18" height="17" viewBox="0 0 18 17"><path d="M3.950 0.600l3.450 3.400-3.450 3.400-3.450-3.400z" fill="#f3c98f"/><path d="M10 2.100l2.200 2.150-2.200 2.150-2.200-2.150z" fill="#f3c98f"/><path d="M10.100 6.900l2.250 2.200-2.250 2.200-2.250-2.200z" fill="#f3c98f"/><path d="M6.600 6.200v2.900h2" stroke="#fbe9cf" stroke-width="1.100" fill="none"/><path d="M13.6 10.8c-.7-.9-2.6-.7-2.6.9 0 1.300 1.500 2.300 2.600 3.300 1.100-1 2.600-2 2.600-3.300 0-1.600-1.900-1.800-2.600-.9z" fill="#c4c4c4"/></svg><span class="t" style="left:95.90px;color:#4ec9b0;letter-spacing:0.315px;margin-left:-0.36px">Program</span><span class="t" style="left:145.20px;color:#c3c9ae;letter-spacing:-0.522px;margin-left:-0.32px">@02000077</span></div>
<div class="row" style="top:660px;"><svg style="left:61px;top:0" width="9" height="17" viewBox="0 0 9 17"><path d="M2.500 3.200v8l4-4z" fill="none" stroke="#f2f2f2" stroke-width="1.100"/></svg><svg style="left:72px;top:0" width="18" height="17" viewBox="0 0 18 17"><path d="M3.950 0.600l3.450 3.400-3.450 3.400-3.450-3.400z" fill="#f3c98f"/><path d="M10 2.100l2.200 2.150-2.200 2.150-2.200-2.150z" fill="#f3c98f"/><path d="M10.100 6.900l2.250 2.200-2.250 2.200-2.250-2.200z" fill="#f3c98f"/><path d="M6.600 6.200v2.900h2" stroke="#fbe9cf" stroke-width="1.100" fill="none"/><path d="M13.6 10.8c-.7-.9-2.6-.7-2.6.9 0 1.300 1.500 2.300 2.600 3.300 1.100-1 2.600-2 2.600-3.300 0-1.600-1.900-1.800-2.600-.9z" fill="#c4c4c4"/></svg><span class="t" style="left:95.90px;color:#4ec9b0;letter-spacing:0.142px;margin-left:-0.36px">ProtonVPN</span><span class="t" style="left:158.10px;color:#c3c9ae;letter-spacing:-0.472px;margin-left:-0.32px">@020000A2</span></div>
<div class="row" style="top:677px;"><svg style="left:61px;top:0" width="9" height="17" viewBox="0 0 9 17"><path d="M2.500 3.200v8l4-4z" fill="none" stroke="#f2f2f2" stroke-width="1.100"/></svg><svg style="left:72px;top:0" width="18" height="17" viewBox="0 0 18 17"><path d="M3.950 0.600l3.450 3.400-3.450 3.400-3.450-3.400z" fill="#f3c98f"/><path d="M10 2.100l2.200 2.150-2.200 2.150-2.200-2.150z" fill="#f3c98f"/><path d="M10.100 6.900l2.250 2.200-2.250 2.200-2.250-2.200z" fill="#f3c98f"/><path d="M6.600 6.200v2.900h2" stroke="#fbe9cf" stroke-width="1.100" fill="none"/><path d="M13.6 10.8c-.7-.9-2.6-.7-2.6.9 0 1.300 1.500 2.300 2.600 3.300 1.100-1 2.600-2 2.600-3.300 0-1.600-1.900-1.800-2.600-.9z" fill="#c4c4c4"/></svg><span class="t" style="left:95.90px;color:#4ec9b0;letter-spacing:-0.159px;margin-left:0.07px">Screenchik</span><span class="t" style="left:156.20px;color:#c3c9ae;letter-spacing:-0.583px;margin-left:-0.32px">@0200008C</span></div>
<div class="row" style="top:694px;"><svg style="left:61px;top:0" width="9" height="17" viewBox="0 0 9 17"><path d="M2.500 3.200v8l4-4z" fill="none" stroke="#f2f2f2" stroke-width="1.100"/></svg><svg style="left:72px;top:0" width="18" height="17" viewBox="0 0 18 17"><path d="M6.100 0.900l4.200 4.150-4.200 4.150-4.150-4.150z" fill="#f3c98f"/><path d="M13.700 4.500l2.400 2.400-2.400 2.400-2.400-2.400z" fill="#f3c98f"/><path d="M13.200 9.700l2.900 2.800-2.900 2.800-2.900-2.800z" fill="#f3c98f"/><path d="M8.500 7.500v4.800h2.500M8.500 7h3" stroke="#f7ead6" stroke-width="1" fill="none"/></svg><span class="t" style="left:95.90px;color:#4ec9b0;letter-spacing:-0.254px;margin-left:0.07px">SenderAPI</span><span class="t" style="left:153.20px;color:#c3c9ae;letter-spacing:-0.745px;margin-left:-0.32px">@0200008E</span></div>
<div class="row" style="top:711px;"><svg style="left:61px;top:0" width="9" height="17" viewBox="0 0 9 17"><path d="M2.500 3.200v8l4-4z" fill="none" stroke="#f2f2f2" stroke-width="1.100"/></svg><svg style="left:72px;top:0" width="18" height="17" viewBox="0 0 18 17"><path d="M6.100 0.900l4.200 4.150-4.200 4.150-4.150-4.150z" fill="#f3c98f"/><path d="M13.700 4.500l2.400 2.400-2.400 2.400-2.400-2.400z" fill="#f3c98f"/><path d="M13.200 9.700l2.900 2.800-2.900 2.800-2.900-2.800z" fill="#f3c98f"/><path d="M8.500 7.500v4.800h2.500M8.500 7h3" stroke="#f7ead6" stroke-width="1" fill="none"/></svg><span class="t" style="left:95.90px;color:#4ec9b0;letter-spacing:-0.080px;margin-left:0.07px">SQLiteHandler</span><span class="t" style="left:175.30px;color:#c3c9ae;letter-spacing:-0.582px;margin-left:-0.32px">@02000088</span></div>
<div class="row" style="top:728px;"><svg style="left:61px;top:0" width="9" height="17" viewBox="0 0 9 17"><path d="M2.500 3.200v8l4-4z" fill="none" stroke="#f2f2f2" stroke-width="1.100"/></svg><svg style="left:72px;top:0" width="18" height="17" viewBox="0 0 18 17"><path d="M3.950 0.600l3.450 3.400-3.450 3.400-3.450-3.400z" fill="#f3c98f"/><path d="M10 2.100l2.200 2.150-2.200 2.150-2.200-2.150z" fill="#f3c98f"/><path d="M10.100 6.900l2.250 2.200-2.250 2.200-2.250-2.200z" fill="#f3c98f"/><path d="M6.600 6.200v2.900h2" stroke="#fbe9cf" stroke-width="1.100" fill="none"/><path d="M13.6 10.8c-.7-.9-2.6-.7-2.6.9 0 1.300 1.500 2.300 2.600 3.300 1.100-1 2.600-2 2.600-3.300 0-1.600-1.900-1.800-2.600-.9z" fill="#c4c4c4"/></svg><span class="t" style="left:95.90px;color:#4ec9b0;letter-spacing:-0.207px;margin-left:0.07px">StartVPN</span><span class="t" style="left:146.10px;color:#c3c9ae;letter-spacing:-0.469px;margin-left:-0.32px">@020000A3</span></div>
<div class="row" style="top:745px;"><svg style="left:61px;top:0" width="9" height="17" viewBox="0 0 9 17"><path d="M2.500 3.200v8l4-4z" fill="none" stroke="#f2f2f2" stroke-width="1.100"/></svg><svg style="left:72px;top:0" width="18" height="17" viewBox="0 0 18 17"><path d="M3.950 0.600l3.450 3.400-3.450 3.400-3.450-3.400z" fill="#f3c98f"/><path d="M10 2.100l2.200 2.150-2.200 2.150-2.200-2.150z" fill="#f3c98f"/><path d="M10.100 6.900l2.250 2.200-2.250 2.200-2.250-2.200z" fill="#f3c98f"/><path d="M6.600 6.200v2.900h2" stroke="#fbe9cf" stroke-width="1.100" fill="none"/><path d="M13.6 10.8c-.7-.9-2.6-.7-2.6.9 0 1.300 1.500 2.300 2.600 3.300 1.100-1 2.600-2 2.600-3.300 0-1.600-1.900-1.800-2.600-.9z" fill="#c4c4c4"/></svg><span class="t" style="left:95.90px;color:#4ec9b0;letter-spacing:-0.076px;margin-left:0.07px">StartWallets</span><span class="t" style="left:161.10px;color:#c3c9ae;letter-spacing:-0.655px;margin-left:-0.32px">@0200003F</span></div>
<div class="row" style="top:762px;"><svg style="left:61px;top:0" width="9" height="17" viewBox="0 0 9 17"><path d="M2.500 3.200v8l4-4z" fill="none" stroke="#f2f2f2" stroke-width="1.100"/></svg><svg style="left:72px;top:0" width="18" height="17" viewBox="0 0 18 17"><path d="M3.950 0.600l3.450 3.400-3.450 3.400-3.450-3.400z" fill="#f3c98f"/><path d="M10 2.100l2.200 2.150-2.200 2.150-2.200-2.150z" fill="#f3c98f"/><path d="M10.100 6.900l2.250 2.200-2.250 2.200-2.250-2.200z" fill="#f3c98f"/><path d="M6.600 6.200v2.900h2" stroke="#fbe9cf" stroke-width="1.100" fill="none"/><path d="M13.6 10.8c-.7-.9-2.6-.7-2.6.9 0 1.300 1.500 2.300 2.600 3.300 1.100-1 2.600-2 2.600-3.300 0-1.600-1.900-1.800-2.600-.9z" fill="#c4c4c4"/></svg><span class="t" style="left:95.90px;color:#4ec9b0;letter-spacing:-0.223px;margin-left:0.07px">Steam</span><span class="t" style="left:132.00px;color:#c3c9ae;letter-spacing:-0.572px;margin-left:-0.32px">@02000092</span></div>
<div class="row" style="top:779px;"><svg style="left:61px;top:0" width="9" height="17" viewBox="0 0 9 17"><path d="M2.500 3.200v8l4-4z" fill="none" stroke="#f2f2f2" stroke-width="1.100"/></svg><svg style="left:72px;top:0" width="18" height="17" viewBox="0 0 18 17"><path d="M3.950 0.600l3.450 3.400-3.450 3.400-3.450-3.400z" fill="#f3c98f"/><path d="M10 2.100l2.200 2.150-2.200 2.150-2.200-2.150z" fill="#f3c98f"/><path d="M10.100 6.900l2.250 2.200-2.250 2.200-2.250-2.200z" fill="#f3c98f"/><path d="M6.600 6.200v2.900h2" stroke="#fbe9cf" stroke-width="1.100" fill="none"/><path d="M13.6 10.8c-.7-.9-2.6-.7-2.6.9 0 1.300 1.500 2.300 2.600 3.300 1.100-1 2.600-2 2.600-3.300 0-1.600-1.900-1.800-2.600-.9z" fill="#c4c4c4"/></svg><span class="t" style="left:95.90px;color:#4ec9b0;letter-spacing:0.016px;margin-left:0.07px">SystemInfo</span><span class="t" style="left:158.00px;color:#c3c9ae;letter-spacing:-0.557px;margin-left:-0.32px">@02000098</span></div>
<div class="row" style="top:796px;"><svg style="left:61px;top:0" width="9" height="17" viewBox="0 0 9 17"><path d="M2.500 3.200v8l4-4z" fill="none" stroke="#f2f2f2" stroke-width="1.100"/></svg><svg style="left:72px;top:0" width="18" height="17" viewBox="0 0 18 17"><path d="M3.950 0.600l3.450 3.400-3.450 3.400-3.450-3.400z" fill="#f3c98f"/><path d="M10 2.100l2.200 2.150-2.200 2.150-2.200-2.150z" fill="#f3c98f"/><path d="M10.100 6.900l2.250 2.200-2.250 2.200-2.250-2.200z" fill="#f3c98f"/><path d="M6.600 6.200v2.900h2" stroke="#fbe9cf" stroke-width="1.100" fill="none"/><path d="M13.6 10.8c-.7-.9-2.6-.7-2.6.9 0 1.300 1.500 2.300 2.600 3.300 1.100-1 2.600-2 2.600-3.300 0-1.600-1.900-1.800-2.600-.9z" fill="#c4c4c4"/></svg><span class="t" style="left:95.90px;color:#4ec9b0;letter-spacing:-0.051px;margin-left:0.34px">Telegram</span><span class="t" style="left:147.00px;color:#c3c9ae;letter-spacing:-0.569px;margin-left:-0.32px">@0200009B</span></div>
<div style="left:11px;top:812px;width:543px;height:2px;background:#2d2d30"></div><div style="left:11px;top:811px;width:543px;height:1px;background:#414144"></div><div style="left:11px;top:29px;width:1px;height:783px;background:#414144"></div><div style="left:560px;top:7px;width:84px;height:23px;background:#3f3f43"></div><div style="left:560px;top:28px;width:1339px;height:2px;background:#414145"></div><div id="tab" class="t" style="left:563.6px;top:8px;font-size:11.8px;line-height:21px;height:21px;color:#f1f1f1;letter-spacing:-0.334px;left:563.43px">PathsCV20</div><svg style="left:627px;top:12px" width="14" height="13" viewBox="0 0 14 13"><path d="M2.300 2.400l8.600 7.600M10.900 2.400l-8.600 7.600" stroke="#77777c" stroke-width="1.300" fill="none"/></svg><div style="left:560px;top:30px;width:1330px;height:765px;background:#1e1e1e"></div><div style="left:560px;top:30px;width:17px;height:765px;background:#333333"></div><div class="g" style="left:634px;top:30px;height:765px;background:repeating-linear-gradient(180deg,#727272 0,#727272 3px,transparent 3px,transparent 6px);background-position:0 1px"></div><div class="g" style="left:662px;top:30px;height:765px;background:repeating-linear-gradient(180deg,#2b7560 0,#2b7560 3px,transparent 3px,transparent 6px);background-position:0 1px"></div><div class="g" style="left:690px;top:149px;height:646px;background:repeating-linear-gradient(180deg,#606060 0,#606060 3px,transparent 3px,transparent 6px);background-position:0 -1px"></div><div class="g" style="left:718px;top:162px;height:232px;background:repeating-linear-gradient(180deg,#606060 0,#606060 3px,transparent 3px,transparent 6px);background-position:0 -1px"></div><div class="g" style="left:718px;top:420px;height:232px;background:repeating-linear-gradient(180deg,#606060 0,#606060 3px,transparent 3px,transparent 6px);background-position:0 -1px"></div><div class="g" style="left:718px;top:678px;height:117px;background:repeating-linear-gradient(180deg,#606060 0,#606060 3px,transparent 3px,transparent 6px);background-position:0 -1px"></div><div class="g" style="left:746px;top:207px;height:174px;background:repeating-linear-gradient(180deg,#606060 0,#606060 3px,transparent 3px,transparent 6px);background-position:0 -1px"></div><div class="g" style="left:746px;top:465px;height:174px;background:repeating-linear-gradient(180deg,#606060 0,#606060 3px,transparent 3px,transparent 6px);background-position:0 -1px"></div><div class="g" style="left:746px;top:723px;height:72px;background:repeating-linear-gradient(180deg,#606060 0,#606060 3px,transparent 3px,transparent 6px);background-position:0 -1px"></div><div class="g" style="left:774px;top:220px;height:32px;background:repeating-linear-gradient(180deg,#606060 0,#606060 3px,transparent 3px,transparent 6px);background-position:0 -1px"></div><div class="g" style="left:774px;top:278px;height:32px;background:repeating-linear-gradient(180deg,#606060 0,#606060 3px,transparent 3px,transparent 6px);background-position:0 -1px"></div><div class="g" style="left:774px;top:336px;height:32px;background:repeating-linear-gradient(180deg,#606060 0,#606060 3px,transparent 3px,transparent 6px);background-position:0 -1px"></div><div class="g" style="left:774px;top:478px;height:32px;background:repeating-linear-gradient(180deg,#606060 0,#606060 3px,transparent 3px,transparent 6px);background-position:0 -1px"></div><div class="g" style="left:774px;top:536px;height:32px;background:repeating-linear-gradient(180deg,#606060 0,#606060 3px,transparent 3px,transparent 6px);background-position:0 -1px"></div><div class="g" style="left:774px;top:594px;height:32px;background:repeating-linear-gradient(180deg,#606060 0,#606060 3px,transparent 3px,transparent 6px);background-position:0 -1px"></div><div class="g" style="left:774px;top:736px;height:32px;background:repeating-linear-gradient(180deg,#606060 0,#606060 3px,transparent 3px,transparent 6px);background-position:0 -1px"></div><div class="g" style="left:774px;top:794px;height:1px;background:repeating-linear-gradient(180deg,#606060 0,#606060 3px,transparent 3px,transparent 6px);background-position:0 -1px"></div>
<div class="ln" style="top:31.3px">16</div><div class="cl" style="top:31.3px">        <span class="k-k">public</span> <span class="k-k">static</span> <span class="k-k">string</span> <span class="k-sf">commandT</span> = <span class="k-k">string</span>.<span class="k-sm">Format</span>(<span class="k-s">&quot;--restore-last-session --remote-debugging-port={0} --user-data-dir=&quot;</span>, <span class="k-n">9222</span>);</div>
<div class="ln" style="top:44.3px">17</div>
<div class="ln" style="top:60.3px">18</div><div class="cl" style="top:60.3px">        <span class="k-c">// Token: 0x0400007E RID: 126</span></div>
<div class="ln" style="top:76.3px">19</div><div class="cl" style="top:76.3px">        <span class="k-k">private</span> <span class="k-k">static</span> <span class="k-k">readonly</span> <span class="k-k">string</span> <span class="k-sf">LOCAL_APP_DATA</span> = <span class="k-st">Environment</span>.<span class="k-sm">GetFolderPath</span>(<span class="k-st">Environment</span>.<span class="k-en">SpecialFolder</span>.<span class="k-ef">LocalApplicationData</span>);</div>
<div class="ln" style="top:89.3px">20</div>
<div class="ln" style="top:105.3px">21</div><div class="cl" style="top:105.3px">        <span class="k-c">// Token: 0x0400007F RID: 127</span></div>
<div class="ln" style="top:121.3px">22</div><div class="cl" style="top:121.3px">        <span class="k-k">public</span> <span class="k-k">static</span> <span class="k-k">readonly</span> <span class="k-t">Dictionary</span>&lt;<span class="k-k">string</span>, <span class="k-t">Dictionary</span>&lt;<span class="k-k">string</span>, <span class="k-k">string</span>&gt;&gt; <span class="k-sf">PATHS</span> = <span class="k-k">new</span> <span class="k-t">Dictionary</span>&lt;<span class="k-k">string</span>, <span class="k-t">Dictionary</span>&lt;<span class="k-k">string</span>, <span class="k-k">string</span>&gt;&gt;</div>
<div class="ln" style="top:134.3px">23</div><div class="cl" style="top:134.3px">        {</div>
<div class="ln" style="top:147.3px">24</div><div class="cl" style="top:147.3px">            {</div>
<div class="ln" style="top:163.3px">25</div><div class="cl" style="top:163.3px">                <span class="k-s">&quot;Google&quot;</span>,</div>
<div class="ln" style="top:179.3px">26</div><div class="cl" style="top:179.3px">                <span class="k-k">new</span> <span class="k-t">Dictionary</span>&lt;<span class="k-k">string</span>, <span class="k-k">string</span>&gt;</div>
<div class="ln" style="top:192.3px">27</div><div class="cl" style="top:192.3px">                {</div>
<div class="ln" style="top:205.3px">28</div><div class="cl" style="top:205.3px">                    {</div>
<div class="ln" style="top:221.3px">29</div><div class="cl" style="top:221.3px">                        <span class="k-s">&quot;bin1&quot;</span>,</div>
<div class="ln" style="top:237.3px">30</div><div class="cl" style="top:237.3px">                        <span class="k-s">&quot;C:\\Program Files\\Google\\Chrome\\Application\\chrome.exe&quot;</span></div>
<div class="ln" style="top:250.3px">31</div><div class="cl" style="top:250.3px">                    },</div>
<div class="ln" style="top:263.3px">32</div><div class="cl" style="top:263.3px">                    {</div>
<div class="ln" style="top:279.3px">33</div><div class="cl" style="top:279.3px">                        <span class="k-s">&quot;bin2&quot;</span>,</div>
<div class="ln" style="top:295.3px">34</div><div class="cl" style="top:295.3px">                        <span class="k-s">&quot;C:\\Program Files (x86)\\Google\\Chrome\\Application\\chrome.exe&quot;</span></div>
<div class="ln" style="top:308.3px">35</div><div class="cl" style="top:308.3px">                    },</div>
<div class="ln" style="top:321.3px">36</div><div class="cl" style="top:321.3px">                    {</div>
<div class="ln" style="top:337.3px">37</div><div class="cl" style="top:337.3px">                        <span class="k-s">&quot;bin3&quot;</span>,</div>
<div class="ln" style="top:353.3px">38</div><div class="cl" style="top:353.3px">                        <span class="k-t">PathsCV20</span>.<span class="k-sf">LOCAL_APP_DATA</span> + <span class="k-s">&quot;\\Google\\Chrome\\Application\\chrome.exe&quot;</span></div>
<div class="ln" style="top:366.3px">39</div><div class="cl" style="top:366.3px">                    }</div>
<div class="ln" style="top:379.3px">40</div><div class="cl" style="top:379.3px">                }</div>
<div class="ln" style="top:392.3px">41</div><div class="cl" style="top:392.3px">            },</div>
<div class="ln" style="top:405.3px">42</div><div class="cl" style="top:405.3px">            {</div>
<div class="ln" style="top:421.3px">43</div><div class="cl" style="top:421.3px">                <span class="k-s">&quot;Edge&quot;</span>,</div>
<div class="ln" style="top:437.3px">44</div><div class="cl" style="top:437.3px">                <span class="k-k">new</span> <span class="k-t">Dictionary</span>&lt;<span class="k-k">string</span>, <span class="k-k">string</span>&gt;</div>
<div class="ln" style="top:450.3px">45</div><div class="cl" style="top:450.3px">                {</div>
<div class="ln" style="top:463.3px">46</div><div class="cl" style="top:463.3px">                    {</div>
<div class="ln" style="top:479.3px">47</div><div class="cl" style="top:479.3px">                        <span class="k-s">&quot;bin1&quot;</span>,</div>
<div class="ln" style="top:495.3px">48</div><div class="cl" style="top:495.3px">                        <span class="k-s">&quot;C:\\Program Files (x86)\\Microsoft\\Edge\\Application\\msedge.exe&quot;</span></div>
<div class="ln" style="top:508.3px">49</div><div class="cl" style="top:508.3px">                    },</div>
<div class="ln" style="top:521.3px">50</div><div class="cl" style="top:521.3px">                    {</div>
<div class="ln" style="top:537.3px">51</div><div class="cl" style="top:537.3px">                        <span class="k-s">&quot;bin2&quot;</span>,</div>
<div class="ln" style="top:553.3px">52</div><div class="cl" style="top:553.3px">                        <span class="k-s">&quot;C:\\Program Files\\Microsoft\\Edge\\Application\\msedge.exe&quot;</span></div>
<div class="ln" style="top:566.3px">53</div><div class="cl" style="top:566.3px">                    },</div>
<div class="ln" style="top:579.3px">54</div><div class="cl" style="top:579.3px">                    {</div>
<div class="ln" style="top:595.3px">55</div><div class="cl" style="top:595.3px">                        <span class="k-s">&quot;bin3&quot;</span>,</div>
<div class="ln" style="top:611.3px">56</div><div class="cl" style="top:611.3px">                        <span class="k-t">PathsCV20</span>.<span class="k-sf">none</span> ?? <span class="k-s">&quot;&quot;</span></div>
<div class="ln" style="top:624.3px">57</div><div class="cl" style="top:624.3px">                    }</div>
<div class="ln" style="top:637.3px">58</div><div class="cl" style="top:637.3px">                }</div>
<div class="ln" style="top:650.3px">59</div><div class="cl" style="top:650.3px">            },</div>
<div class="ln" style="top:663.3px">60</div><div class="cl" style="top:663.3px">            {</div>
<div class="ln" style="top:679.3px">61</div><div class="cl" style="top:679.3px">                <span class="k-s">&quot;Brave&quot;</span>,</div>
<div class="ln" style="top:695.3px">62</div><div class="cl" style="top:695.3px">                <span class="k-k">new</span> <span class="k-t">Dictionary</span>&lt;<span class="k-k">string</span>, <span class="k-k">string</span>&gt;</div>
<div class="ln" style="top:708.3px">63</div><div class="cl" style="top:708.3px">                {</div>
<div class="ln" style="top:721.3px">64</div><div class="cl" style="top:721.3px">                    {</div>
<div class="ln" style="top:737.3px">65</div><div class="cl" style="top:737.3px">                        <span class="k-s">&quot;bin1&quot;</span>,</div>
<div class="ln" style="top:753.3px">66</div><div class="cl" style="top:753.3px">                        <span class="k-s">&quot;C:\\Program Files\\BraveSoftware\\Brave-Browser\\Application\\brave.exe&quot;</span></div>
<div class="ln" style="top:766.3px">67</div><div class="cl" style="top:766.3px">                    },</div>
<div class="ln" style="top:779.3px">68</div><div class="cl" style="top:779.3px">                    {</div>
<div style="left:1890px;top:30px;width:9px;height:765px;background:#3e3e42"></div><div style="left:1894px;top:68px;width:5px;height:67px;background:#686868"></div><svg style="left:1890px;top:30px" width="9" height="765" viewBox="0 0 9 765"><path d="M3.800 11.300h9.200l-4.600 -5.200z" fill="#999"/><path d="M3.800 754h9.200l-4.600 5.200z" fill="#999"/></svg><div style="left:560px;top:795px;width:1339px;height:17px;background:#3e3e42"></div><div style="left:560px;top:795px;width:60px;height:16px;background:#252526;border:1px solid #434346;box-sizing:border-box"></div><div style="left:607px;top:796px;width:1px;height:14px;background:#434346"></div><div id="zoom" class="t" style="left:565px;top:795.4px;font-size:11.4px;line-height:17px;color:#f4f4f4;letter-spacing:-0.062px;left:564.93px">100 %</div><svg style="left:608px;top:796px" width="12" height="14" viewBox="0 0 12 14"><path d="M2.700 6.900h6.600l-3.300 3.400z" fill="#c8c8c8"/></svg><svg style="left:620px;top:796px" width="16" height="15" viewBox="0 0 16 15"><path d="M11 3.800v7.400l-5.200-3.700z" fill="#58585c"/></svg><svg style="left:1872px;top:796px" width="16" height="15" viewBox="0 0 16 15"><path d="M7 3.600v7.400l5.200-3.700z" fill="#626266"/></svg></body></html>
